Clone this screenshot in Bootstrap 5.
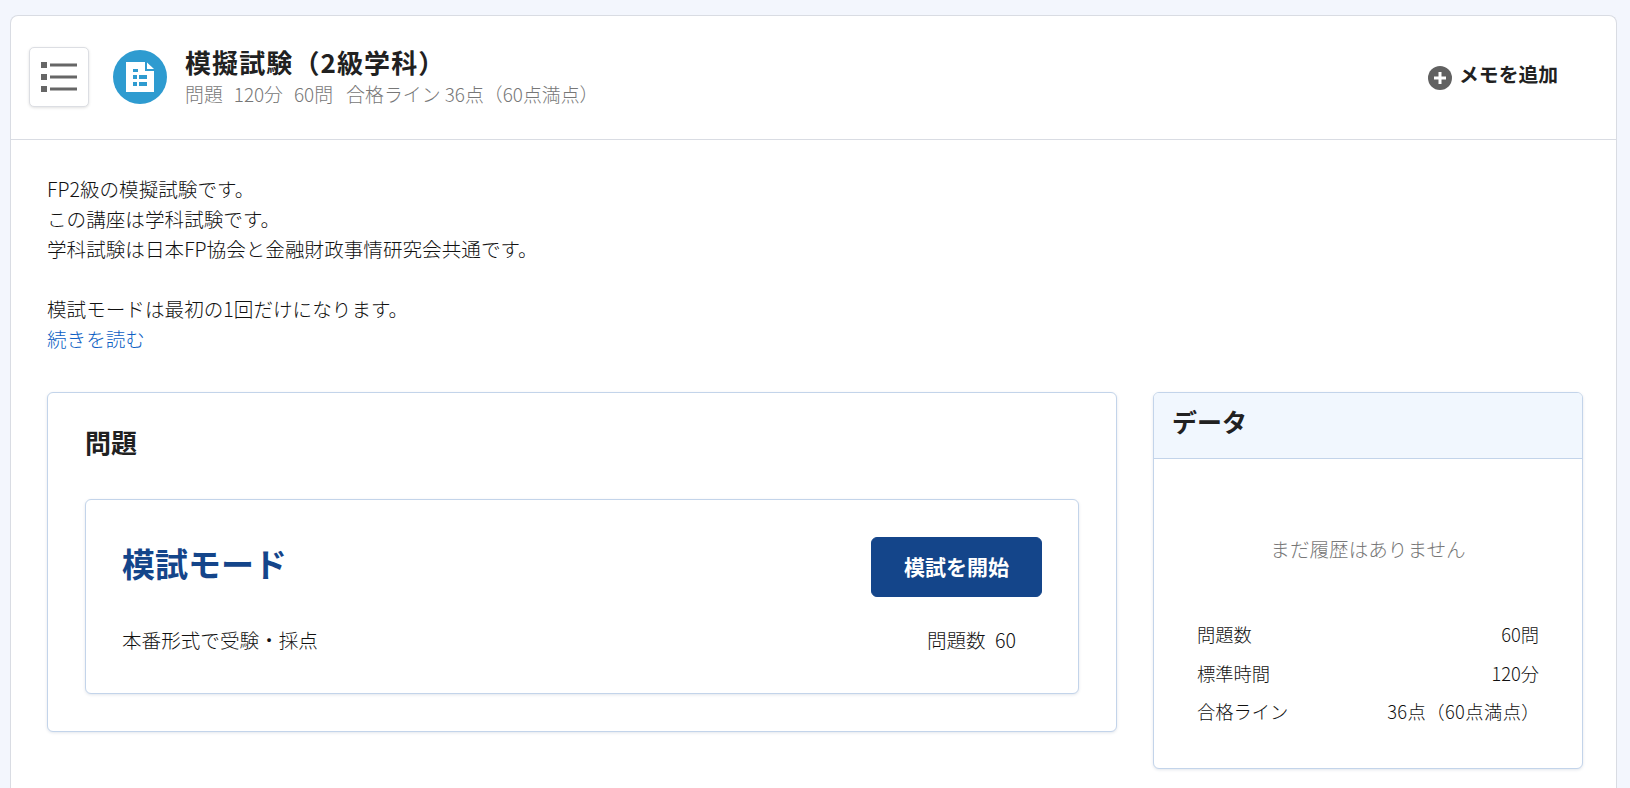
<!DOCTYPE html>
<html lang="ja">
<head>
  <meta charset="UTF-8" />
  <meta name="viewport" content="width=device-width, initial-scale=1.0"/>
  <title>模擬試験（2級学科）</title>
  <link href="https://cdn.jsdelivr.net/npm/bootstrap@5.3.3/dist/css/bootstrap.min.css" rel="stylesheet" />
  <style>
    html, body { height: 100%; overflow: hidden; }
    body {
      background-color: #f3f6fd;
      color: #111;
      font-family: "Noto Sans CJK JP", "Liberation Sans", sans-serif;
      font-size: 19.6px;
      font-weight: 300;
      padding: 15px 13px 0 10px;
    }
    .page-box {
      background: #fff;
      border: 1px solid #d9dce3;
      border-bottom: 0;
      border-radius: 8px 8px 0 0;
      height: 800px;
    }
    .page-head {
      height: 124px;
      padding: 0 58px 0 18px;
      border-bottom: 1px solid #d9dce3;
    }
    .menu-btn {
      width: 60px;
      height: 60px;
      background: #fff;
      border: 1px solid #dcdee3;
      border-radius: 5px;
      box-shadow: 0 1px 3px rgba(0,0,0,.12);
      margin: 0 24px 2px 0;
    }
    .head-icon {
      width: 54px;
      height: 54px;
      border-radius: 50%;
      background: #2e9bd0;
      margin: 0 18px 2px 0;
    }
    .head-title { font-size: 26px; font-weight: 700; color: #212121; line-height: 32px; letter-spacing: 1.100px; margin-bottom: 4px; }
    .head-sub { font-size: 18.900px; line-height: 24px; color: #777; display: flex; gap: 11px; margin-bottom: 3px; }
    .head-sub-pass { margin-left: 2px; }
    .memo-link { font-size: 19.800px; font-weight: 700; color: #212121; text-decoration: none; }
    .memo-plus { width: 24px; height: 24px; margin-right: 7px; }
    .memo-text { margin-bottom: 7px; }
    .page-main { padding: 34px 30px 0 36px; }
    .lead-text { line-height: 30px; margin-bottom: 37.500px; }
    .more-link { color: #0d5fc4; text-decoration: none; }
    .box-line {
      background: #fff;
      border: 1px solid #c3d4ea;
      border-radius: 6px;
      box-shadow: 0 1px 3px rgba(60,90,130,.15);
    }
    .exam-box { width: 1070px; height: 340px; padding: 31px 37px 0; flex-shrink: 0; }
    .exam-head { font-size: 26px; font-weight: 700; color: #212121; line-height: 36px; margin-bottom: 39px; }
    .mode-box { height: 195px; padding: 33px 36px 0 36px; }
    .mode-name { font-size: 33px; font-weight: 700; color: #14458a; line-height: 60px; padding-bottom: 10px; }
    .start-btn {
      width: 171px;
      height: 60px;
      margin-bottom: 2px;
      background: #14458a;
      border-color: #14458a;
      color: #fff;
      font-size: 21px;
      font-weight: 700;
      border-radius: 6px;
    }
    .mode-count { padding-right: 26px; word-spacing: 5px; }
    .mode-foot { margin-top: 22px; line-height: 30px; }
    .data-box { width: 430px; height: 377px; margin-left: 36px; overflow: hidden; flex-shrink: 0; }
    .data-head {
      height: 66px;
      line-height: 56px;
      padding-left: 18px;
      font-size: 25px;
      font-weight: 700;
      color: #212121;
      background: #f1f7fe;
      border-bottom: 1px solid #c3d4ea;
    }
    .data-empty { height: 156.500px; padding-top: 75px; text-align: center; color: #777; line-height: 30px; }
    .data-rows { padding: 0 43px; font-size: 18.300px; line-height: 38.500px; }
    .data-val-note { letter-spacing: .4px; margin-right: -1px; }
  </style>
</head>
<body>

  <div class="page-box">
    <div class="page-head d-flex align-items-center">
      <button class="menu-btn btn p-0 d-flex align-items-center justify-content-center" type="button" aria-label="menu">
        <svg width="36" height="30" viewBox="0 0 36 30" fill="#666">
          <rect x="0" y="0" width="6" height="6"/><rect x="9" y="1.500" width="27" height="3"/>
          <rect x="0" y="12" width="6" height="6"/><rect x="9" y="13.500" width="27" height="3"/>
          <rect x="0" y="24" width="6" height="6"/><rect x="9" y="25.500" width="27" height="3"/>
        </svg>
      </button>
      <div class="head-icon d-flex align-items-center justify-content-center">
        <svg width="28" height="30" viewBox="0 0 28 30">
          <path fill="#fff" d="M0 0H19V9H28V30H0Z"/>
          <path fill="#fff" d="M21 0.500L28 7H21Z"/>
          <path fill="#2e9bd0" d="M7 7H12V10H7ZM7 13H11V17H7ZM13 13H21V17H13ZM7 20H11V24H7ZM13 20H21V24H13Z"/>
        </svg>
      </div>
      <div class="flex-grow-1">
        <div class="head-title">模擬試験（2級学科）</div>
        <div class="head-sub"><span>問題</span><span>120分</span><span>60問</span><span class="head-sub-pass">合格ライン 36点（60点満点）</span></div>
      </div>
      <a class="memo-link d-flex align-items-center" href="#">
        <svg class="memo-plus" viewBox="0 0 24 24">
          <circle cx="12" cy="12" r="12" fill="#616161"/>
          <path d="M12 6v12M6 12h12" stroke="#fff" stroke-width="3"/>
        </svg>
        <span class="memo-text">メモを追加</span>
      </a>
    </div>

    <div class="page-main">
      <p class="lead-text">
        FP2級の模擬試験です。<br>
        この講座は学科試験です。<br>
        学科試験は日本FP協会と金融財政事情研究会共通です。<br>
        <br>
        模試モードは最初の1回だけになります。<br>
        <a class="more-link" href="#">続きを読む</a>
      </p>

      <div class="d-flex align-items-start">
        <div class="exam-box box-line">
          <div class="exam-head">問題</div>
          <div class="mode-box box-line">
            <div class="d-flex justify-content-between align-items-center">
              <div class="mode-name">模試モード</div>
              <button class="start-btn btn" type="button">模試を開始</button>
            </div>
            <div class="mode-foot d-flex justify-content-between">
              <span>本番形式で受験・採点</span>
              <span class="mode-count">問題数 60</span>
            </div>
          </div>
        </div>

        <div class="data-box box-line">
          <div class="data-head">データ</div>
          <div class="data-empty">まだ履歴はありません</div>
          <div class="data-rows">
            <div class="d-flex justify-content-between"><span>問題数</span><span>60問</span></div>
            <div class="d-flex justify-content-between"><span>標準時間</span><span>120分</span></div>
            <div class="d-flex justify-content-between"><span>合格ライン</span><span class="data-val-note">36点（60点満点）</span></div>
          </div>
        </div>
      </div>
    </div>
  </div>

  <script src="https://cdn.jsdelivr.net/npm/bootstrap@5.3.3/dist/js/bootstrap.bundle.min.js"></script>
</body>
</html>
